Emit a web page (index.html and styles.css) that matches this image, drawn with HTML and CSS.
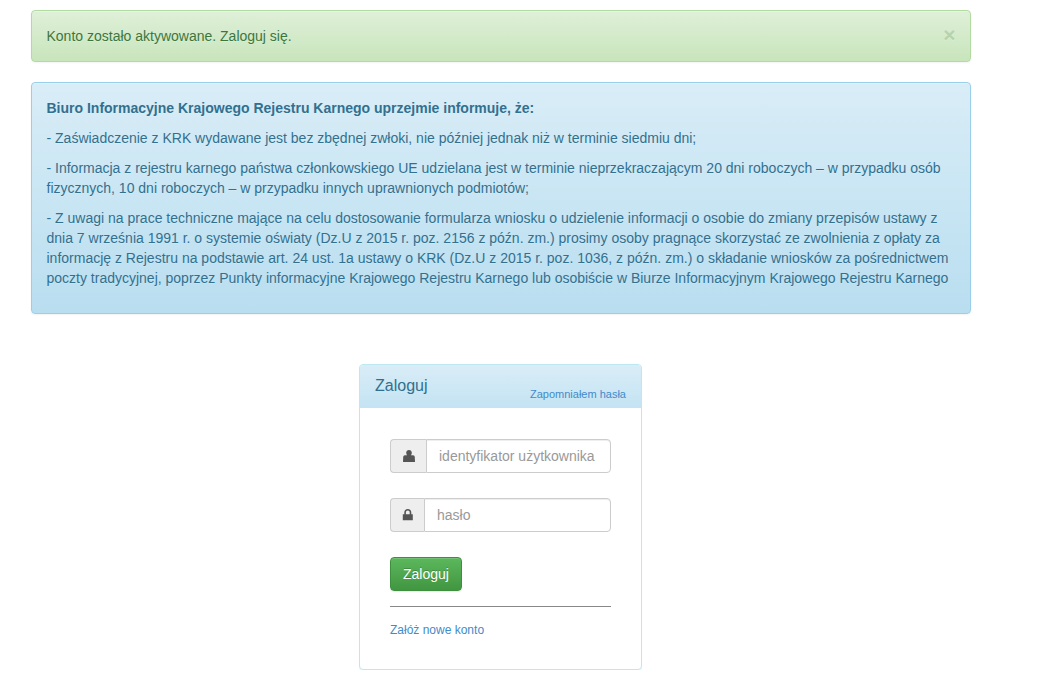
FILE: index.html
```html
<!DOCTYPE html>
<html lang="pl">
<head>
<meta charset="utf-8">
<title>Zaloguj</title>
<link rel="stylesheet" href="styles.css">
</head>
<body>
<main class="page">
  <div class="alert alert-success">
    <button class="close" type="button">×</button>
    Konto zostało aktywowane. Zaloguj się.
  </div>
  <div class="alert alert-info">
    <p><strong>Biuro Informacyjne Krajowego Rejestru Karnego uprzejmie informuje, że:</strong></p>
    <p>- Zaświadczenie z KRK wydawane jest bez zbędnej zwłoki, nie później jednak niż w terminie siedmiu dni;</p>
    <p>- Informacja z rejestru karnego państwa członkowskiego UE udzielana jest w terminie nieprzekraczającym 20 dni roboczych – w przypadku osób fizycznych, 10 dni roboczych – w przypadku innych uprawnionych podmiotów;</p>
    <p>- Z uwagi na prace techniczne mające na celu dostosowanie formularza wniosku o udzielenie informacji o osobie do zmiany przepisów ustawy z dnia 7 września 1991 r. o systemie oświaty (Dz.U z 2015 r. poz. 2156 z późn. zm.) prosimy osoby pragnące skorzystać ze zwolnienia z opłaty za informację z Rejestru na podstawie art. 24 ust. 1a ustawy o KRK (Dz.U z 2015 r. poz. 1036, z późn. zm.) o składanie wniosków za pośrednictwem poczty tradycyjnej, poprzez Punkty informacyjne Krajowego Rejestru Karnego lub osobiście w Biurze Informacyjnym Krajowego Rejestru Karnego</p>
  </div>
  <section class="panel">
    <header class="panel-heading">
      <h3 class="panel-title">Zaloguj</h3>
      <a class="forgot" href="#">Zapomniałem hasła</a>
    </header>
    <form class="panel-body">
      <div class="input-group">
        <span class="addon addon-user">
          <svg class="icon" viewBox="0 0 12 12"><path d="M6 0C4.300 0 3.200 1.200 3.200 2.800c0 1 .4 1.900.9 2.400H2C.8 5.200.3 6 .2 7.200L0 12h12l-.2-4.800C11.700 6 11.200 5.200 10 5.200H7.900c.5-.5.9-1.400.9-2.400C8.800 1.200 7.700 0 6 0z"/></svg>
        </span>
        <input class="form-control" type="text" placeholder="identyfikator użytkownika">
      </div>
      <div class="input-group">
        <span class="addon addon-lock">
          <svg class="icon" viewBox="0 0 12 12"><path fill-rule="evenodd" d="M5.800 0C3.700 0 2.300 1.400 2.300 3.500V5.200H.8v6.100h10V5.200H9.300V3.500C9.300 1.400 7.900 0 5.800 0zm0 1.500c1.200 0 1.900.8 1.900 2.100v1.600H3.900V3.600c0-1.300.7-2.100 1.900-2.100z"/></svg>
        </span>
        <input class="form-control" type="password" placeholder="hasło">
      </div>
      <button class="btn" type="button">Zaloguj</button>
      <hr class="divider">
      <a class="register" href="#">Załóż nowe konto</a>
    </form>
  </section>
</main>
</body>
</html>
```
FILE: styles.css
```css
* { box-sizing: border-box; }
html, body { margin: 0; background: #fff; }
body {
  font-family: "Liberation Sans", Arial, sans-serif;
  font-size: 14px;
  line-height: 20px;
  color: #333;
}
.page { width: 940px; margin-left: 30.5px; padding-top: 10px; }
.alert {
  position: relative;
  padding: 15px;
  margin-bottom: 20px;
  border: 1px solid transparent;
  border-radius: 4px;
  text-shadow: 0 1px 0 rgba(255,255,255,.2);
  box-shadow: inset 0 1px 0 rgba(255,255,255,.25), 0 1px 2px rgba(0,0,0,.05);
}
.alert-success {
  color: #3c763d;
  border-color: #b2dba1;
  background: linear-gradient(to bottom, #dff0d8 0, #c8e5bc 100%);
}
.alert-info {
  color: #31708f;
  border-color: #9acfea;
  background: linear-gradient(to bottom, #d9edf7 0, #b9def0 100%);
  margin-bottom: 50px;
}
.alert p { margin: 0 0 10px; }
.close {
  position: absolute;
  top: 13px;
  right: 14px;
  padding: 0;
  border: 0;
  background: none;
  font: bold 21px/1 "Liberation Sans", Arial, sans-serif;
  color: #3c763d;
  opacity: .2;
  text-shadow: 0 1px 0 #fff;
}
.panel {
  width: 283px;
  height: 306px;
  margin: 0 auto;
  background: #fff;
  border: 1px solid #bce8f1;
  border-radius: 4px;
  box-shadow: 0 1px 1px rgba(0,0,0,.05);
}
.panel-heading {
  height: 43px;
  padding: 10px 15px;
  display: flex;
  justify-content: space-between;
  color: #31708f;
  background: linear-gradient(to bottom, #d9edf7 0, #c4e3f3 100%);
  border-bottom: 1px solid #bce8f1;
  border-radius: 3px 3px 0 0;
}
.panel-title { margin: 0; font-size: 16px; font-weight: 400; line-height: 22px; }
.forgot { align-self: flex-end; font-size: 11px; line-height: 16px; margin-bottom: -5px; color: #428bca; text-decoration: none; }
.panel-body { padding: 31px 30px 0; }
.input-group { display: flex; height: 34px; margin-bottom: 25px; }
.addon {
  display: flex;
  align-items: center;
  justify-content: center;
  background: #eee;
  border: 1px solid #ccc;
  border-right: 0;
  border-radius: 4px 0 0 4px;
  color: #555;
}
.addon-user { width: 36px; }
.addon-lock { width: 34px; }
.icon { width: 12px; height: 12px; fill: #555; display: block; }
.form-control {
  flex: 1;
  min-width: 0;
  padding: 6px 12px;
  font: 14px/20px "Liberation Sans", Arial, sans-serif;
  color: #555;
  border: 1px solid #ccc;
  border-radius: 0 4px 4px 0;
  box-shadow: inset 0 1px 1px rgba(0,0,0,.075);
  outline: 0;
}
.form-control::placeholder { color: #999; opacity: 1; }
.btn {
  display: block;
  width: 72px;
  height: 34px;
  padding: 6px 12px;
  font: 14px/20px "Liberation Sans", Arial, sans-serif;
  color: #fff;
  border: 1px solid #3e8f3e;
  border-radius: 4px;
  background: linear-gradient(to bottom, #5cb85c 0, #419641 100%);
  text-shadow: 0 -1px 0 rgba(0,0,0,.2);
  box-shadow: inset 0 1px 0 rgba(255,255,255,.15), 0 1px 1px rgba(0,0,0,.075);
}
.divider { margin: 15px 0 15px; border: 0; border-top: 1px solid #888; }
.register { font-size: 12px; color: #428bca; text-decoration: none; display: block; line-height: 17px; }
```
